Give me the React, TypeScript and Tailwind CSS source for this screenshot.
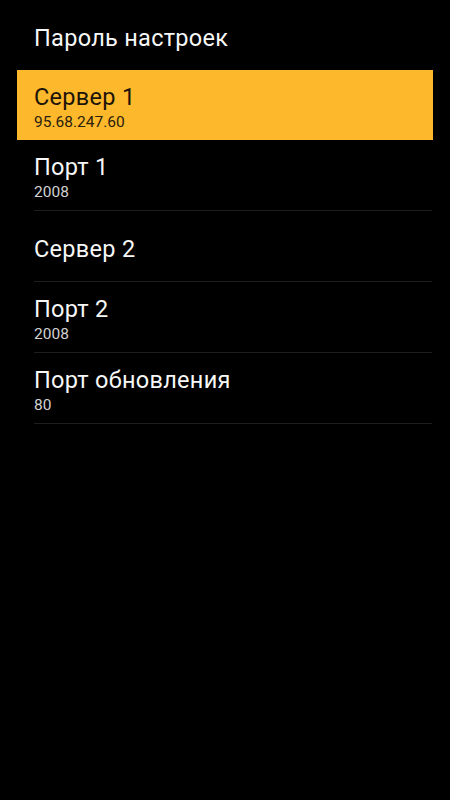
const font = { fontFamily: "Roboto, 'Noto Sans', sans-serif" };

const prefs = [
  { title: "Порт 1", summary: "2008" },
  { title: "Сервер 2" },
  { title: "Порт 2", summary: "2008" },
  { title: "Порт обновления", summary: "80" },
];

export default function App() {
  return (
    <div className="min-h-screen w-full bg-black" style={font}>
      <div className="flex h-[70px] flex-col justify-center pl-[34px] pt-[5px]">
        <div className="text-[23.5px] leading-[26px] tracking-[0.3px] text-[#f7f7f7]">Пароль настроек</div>
      </div>

      <div className="mx-[17px] flex h-[70px] flex-col justify-center bg-[#fdb82b] pl-[17px] pt-[6px]">
        <div className="text-[23.5px] leading-[26px] tracking-[0.3px] text-[#1c1408]">Сервер 1</div>
        <div className="mt-[2px] text-[15.5px] leading-[20px] text-[#2b200c]">95.68.247.60</div>
      </div>

      {prefs.map((p) => (
        <div
          key={p.title}
          className="ml-[34px] mr-[18px] flex h-[71px] flex-col justify-center border-b border-[#1e1e1e] pt-[5px]"
        >
          <div className="text-[23.5px] leading-[26px] tracking-[0.3px] text-[#f7f7f7]">{p.title}</div>
          {p.summary && (
            <div className="mt-[2px] text-[15.5px] leading-[20px] text-[#d2d2d2]">{p.summary}</div>
          )}
        </div>
      ))}
    </div>
  );
}
